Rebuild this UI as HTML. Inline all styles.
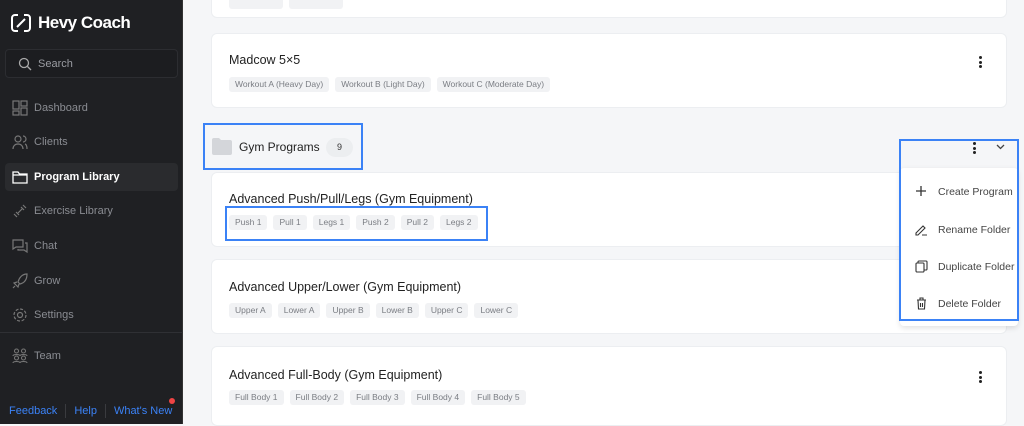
<!DOCTYPE html><html><head><style>
*{box-sizing:border-box;margin:0;padding:0}
body{width:1024px;height:424px;overflow:hidden;background:#f5f6f8;font-family:"Liberation Sans",sans-serif;position:relative}
.sb{position:absolute;left:0;top:0;width:183px;height:424px;background:#1f2023;border-right:1px solid #333}
.logo{position:absolute;left:10px;top:13px;color:#fff;font-size:17px;font-weight:bold;letter-spacing:-0.5px;display:flex;align-items:center;gap:6px}
.search{position:absolute;left:5px;top:49px;width:173px;height:29px;border:1px solid #2c2d31;border-radius:4px;background:#1c1d20;color:#9a9ca2;font-size:11px;padding:8px 0 0 32px}
.search svg{position:absolute;left:12px;top:7px}
.it{position:absolute;left:5px;width:173px;height:28px;color:#8a8c92;font-size:11px;padding:8px 0 0 29px}
.it svg{position:absolute;left:7px;top:6px}
.it.act{background:#2a2b2e;color:#fff;border-radius:4px;font-weight:bold}
.sep{position:absolute;left:0;top:332px;width:183px;height:1px;background:#2f3034}
.links{position:absolute;left:9px;top:404px;font-size:11px;color:#3b82f6;display:flex;align-items:center}
.links i{display:inline-block;width:1px;height:14px;background:#3a3b3f;margin:0 8px}
.dot{position:absolute;left:169px;top:398px;width:6px;height:6px;border-radius:50%;background:#ef4444}
.card{position:absolute;left:211px;width:796px;background:#fff;border-radius:6px;border:1px solid #eceef1}
.ttl{position:absolute;left:17px;font-size:12.5px;color:#222}
.tags{position:absolute;left:17px;display:flex;gap:6px}
.tag{background:#f1f2f4;color:#7a7d83;font-size:8.5px;padding:2px 6px;border-radius:3px;height:15px;line-height:11px}
.kb{position:absolute;right:24px;width:3px}
.kb b{display:block;width:3px;height:3px;background:#222;border-radius:50%;margin-bottom:1.5px}
.hl{position:absolute;border:2px solid #3b82f6}
.menu{position:absolute;left:900px;top:168px;width:118px;height:158px;background:#fff;border-radius:4px;box-shadow:0 2px 6px rgba(0,0,0,.12)}
.mi{position:absolute;left:38px;font-size:10.5px;color:#444}
.mi svg{position:absolute;left:-23px;top:-1px}
</style></head><body>
<div class="sb">
<div class="logo"><svg width="22" height="20" viewBox="0 0 22 20" fill="none" stroke="#fff" stroke-width="2"><path d="M8 2H5a3 3 0 0 0-3 3v10a3 3 0 0 0 3 3h3M14 2h3a3 3 0 0 1 3 3v10a3 3 0 0 1-3 3h-3M7 14l8-8"/></svg>Hevy Coach</div>
<div class="search"><svg width="14" height="14" viewBox="0 0 14 14" fill="none" stroke="#aaa" stroke-width="1.3"><circle cx="6" cy="6" r="4.5"/><path d="M9.5 9.5L13 13"/></svg>Search</div>
<div class="it" style="top:94px"><svg width="16" height="16" viewBox="0 0 16 16" fill="none" stroke="#777" stroke-width="1.2"><rect x="1" y="1" width="6" height="8"/><rect x="9" y="1" width="6" height="5"/><rect x="1" y="11" width="6" height="4"/><rect x="9" y="8" width="6" height="7"/></svg>Dashboard</div>
<div class="it" style="top:128px"><svg width="16" height="16" viewBox="0 0 16 16" fill="none" stroke="#777" stroke-width="1.2"><circle cx="6" cy="5" r="3"/><path d="M1 15c0-3 2-5 5-5s5 2 5 5M11 2a3 3 0 0 1 0 6M13 10c1.5.5 2 2.5 2 5"/></svg>Clients</div>
<div class="it act" style="top:163px"><svg width="16" height="16" viewBox="0 0 16 16" fill="none" stroke="#fff" stroke-width="1.3"><path d="M1 3h5l1.5 2H15v9H1z M1 6h14"/></svg>Program Library</div>
<div class="it" style="top:197px"><svg width="16" height="16" viewBox="0 0 16 16" fill="none" stroke="#777" stroke-width="1.2"><path d="M2 11l3 3M4 9l3 3M9 4l3 3M11 2l3 3M6 10l4-4"/></svg>Exercise Library</div>
<div class="it" style="top:232px"><svg width="16" height="16" viewBox="0 0 16 16" fill="none" stroke="#777" stroke-width="1.2"><path d="M1 2h10v7H4l-3 2zM13 5h2v9l-3-2H6v-1"/></svg>Chat</div>
<div class="it" style="top:267px"><svg width="16" height="16" viewBox="0 0 16 16" fill="none" stroke="#777" stroke-width="1.2"><path d="M15 1c-5 0-8 4-9 8l2 2c4-1 7-4 7-10zM5 9l-3 1 2 2M7 11l-1 3-2-2M3 13l-2 2"/></svg>Grow</div>
<div class="it" style="top:301px"><svg width="16" height="16" viewBox="0 0 16 16" fill="none" stroke="#777" stroke-width="1.2"><circle cx="8" cy="8" r="2.5"/><circle cx="8" cy="8" r="6" stroke-dasharray="3 1.7"/></svg>Settings</div>
<div class="sep"></div>
<div class="it" style="top:342px"><svg width="16" height="16" viewBox="0 0 16 16" fill="none" stroke="#777" stroke-width="1.1"><circle cx="4.5" cy="3" r="2"/><circle cx="11.5" cy="3" r="2"/><circle cx="4.5" cy="10" r="2"/><circle cx="11.5" cy="10" r="2"/><path d="M1 8c0-2 7-2 7 0M8 8c0-2 7-2 7 0M1 15c0-2 7-2 7 0M8 15c0-2 7-2 7 0"/></svg>Team</div>
<div class="links">Feedback<i></i>Help<i></i>What's New</div><div class="dot"></div>
</div>

<div class="card" style="top:-10px;height:28px"><div class="tags" style="top:3px"><span class="tag" style="width:54px"></span><span class="tag" style="width:54px"></span></div></div>

<div class="card" style="top:33px;height:75px"><div class="ttl" style="top:19px">Madcow 5×5</div><div class="kb" style="top:22px"><b></b><b></b><b></b></div>
<div class="tags" style="top:43px"><span class="tag">Workout A (Heavy Day)</span><span class="tag">Workout B (Light Day)</span><span class="tag">Workout C (Moderate Day)</span></div></div>

<svg style="position:absolute;left:212px;top:138px" width="20" height="17" viewBox="0 0 20 17"><path d="M0 2a2 2 0 0 1 2-2h5l2 2h9a2 2 0 0 1 2 2v11a2 2 0 0 1-2 2H2a2 2 0 0 1-2-2z" fill="#d4d6da"/></svg>
<div style="position:absolute;left:239px;top:140px;font-size:12px;color:#222">Gym Programs</div>
<div style="position:absolute;left:326px;top:138px;width:27px;height:19px;border-radius:10px;background:#eceef0;font-size:9px;color:#333;text-align:center;line-height:19px">9</div>
<div class="hl" style="left:203px;top:123px;width:160px;height:47px"></div>

<div class="card" style="top:172px;height:75px"><div class="ttl" style="top:19px">Advanced Push/Pull/Legs (Gym Equipment)</div>
<div class="tags" style="top:42px"><span class="tag">Push 1</span><span class="tag">Pull 1</span><span class="tag">Legs 1</span><span class="tag">Push 2</span><span class="tag">Pull 2</span><span class="tag">Legs 2</span></div></div>
<div class="hl" style="left:225px;top:206px;width:263px;height:35px"></div>

<div class="card" style="top:259px;height:75px"><div class="ttl" style="top:20px">Advanced Upper/Lower (Gym Equipment)</div>
<div class="tags" style="top:43px"><span class="tag">Upper A</span><span class="tag">Lower A</span><span class="tag">Upper B</span><span class="tag">Lower B</span><span class="tag">Upper C</span><span class="tag">Lower C</span></div></div>

<div class="card" style="top:346px;height:80px"><div class="ttl" style="top:21px">Advanced Full-Body (Gym Equipment)</div><div class="kb" style="top:24px"><b></b><b></b><b></b></div>
<div class="tags" style="top:43px"><span class="tag">Full Body 1</span><span class="tag">Full Body 2</span><span class="tag">Full Body 3</span><span class="tag">Full Body 4</span><span class="tag">Full Body 5</span></div></div>

<div class="kb" style="left:973px;top:142px"><b></b><b></b><b></b></div>
<svg style="position:absolute;left:996px;top:144px" width="9" height="6" viewBox="0 0 9 6" fill="none" stroke="#444" stroke-width="1.3"><path d="M1 1l3.5 3.5L8 1"/></svg>
<div class="menu">
<div class="mi" style="top:18px"><svg width="12" height="12" viewBox="0 0 12 12" stroke="#333" stroke-width="1.3"><path d="M6 1v10M1 6h10"/></svg>Create Program</div>
<div class="mi" style="top:56px"><svg width="13" height="13" viewBox="0 0 13 13" fill="none" stroke="#333" stroke-width="1.1"><path d="M1 10l7-7 2 2-7 7H1zM7 12h5"/></svg>Rename Folder</div>
<div class="mi" style="top:93px"><svg width="13" height="13" viewBox="0 0 13 13" fill="none" stroke="#333" stroke-width="1.1"><rect x="1" y="3" width="8" height="9" rx="1"/><path d="M3 3V2a1 1 0 0 1 1-1h7a1 1 0 0 1 1 1v7a1 1 0 0 1-1 1h-2"/></svg>Duplicate Folder</div>
<div class="mi" style="top:130px"><svg width="13" height="13" viewBox="0 0 13 13" fill="none" stroke="#333" stroke-width="1.1"><path d="M2 3h9M5 3V1h3v2M3 3l.5 9h6L10 3M5.5 6v4M7.5 6v4"/></svg>Delete Folder</div>
</div>
<div class="hl" style="left:899px;top:139px;width:120px;height:182px"></div>
</body></html>
